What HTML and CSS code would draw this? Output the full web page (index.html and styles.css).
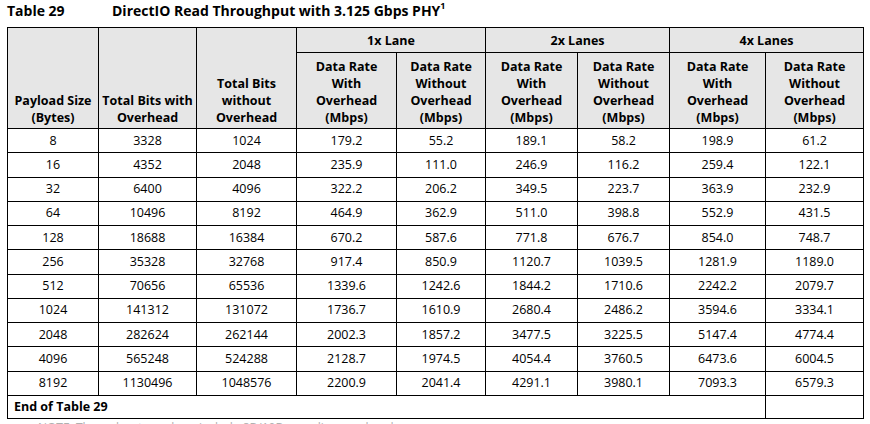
FILE: index.html
```html
<!DOCTYPE html>
<html>
<head>
<meta charset="utf-8">
<link rel="stylesheet" href="styles.css">
</head>
<body>
<div class="page">
  <div class="caption">
    <span class="cap-num">Table 29</span>
    <span class="cap-title">DirectIO Read Throughput with 3.125 Gbps PHY<sup>1</sup></span>
  </div>
  <table class="tbl">
    <colgroup>
      <col class="c1"><col class="c2"><col class="c3"><col class="c4"><col class="c5"><col class="c6"><col class="c7"><col class="c8"><col class="c9">
    </colgroup>
    <thead>
      <tr class="h1">
        <th rowspan="2">Payload Size<br>(Bytes)</th>
        <th rowspan="2">Total Bits with<br>Overhead</th>
        <th rowspan="2">Total Bits<br>without<br>Overhead</th>
        <th colspan="2" class="grp">1x Lane</th>
        <th colspan="2" class="grp">2x Lanes</th>
        <th colspan="2" class="grp">4x Lanes</th>
      </tr>
      <tr class="h2">
        <th>Data Rate<br>With<br>Overhead<br>(Mbps)</th>
        <th>Data Rate<br>Without<br>Overhead<br>(Mbps)</th>
        <th>Data Rate<br>With<br>Overhead<br>(Mbps)</th>
        <th>Data Rate<br>Without<br>Overhead<br>(Mbps)</th>
        <th>Data Rate<br>With<br>Overhead<br>(Mbps)</th>
        <th>Data Rate<br>Without<br>Overhead<br>(Mbps)</th>
      </tr>
    </thead>
    <tbody>
      <tr><td>8</td><td>3328</td><td>1024</td><td>179.2</td><td>55.2</td><td>189.1</td><td>58.2</td><td>198.9</td><td>61.2</td></tr>
      <tr><td>16</td><td>4352</td><td>2048</td><td>235.9</td><td>111.0</td><td>246.9</td><td>116.2</td><td>259.4</td><td>122.1</td></tr>
      <tr><td>32</td><td>6400</td><td>4096</td><td>322.2</td><td>206.2</td><td>349.5</td><td>223.7</td><td>363.9</td><td>232.9</td></tr>
      <tr><td>64</td><td>10496</td><td>8192</td><td>464.9</td><td>362.9</td><td>511.0</td><td>398.8</td><td>552.9</td><td>431.5</td></tr>
      <tr><td>128</td><td>18688</td><td>16384</td><td>670.2</td><td>587.6</td><td>771.8</td><td>676.7</td><td>854.0</td><td>748.7</td></tr>
      <tr><td>256</td><td>35328</td><td>32768</td><td>917.4</td><td>850.9</td><td>1120.7</td><td>1039.5</td><td>1281.9</td><td>1189.0</td></tr>
      <tr><td>512</td><td>70656</td><td>65536</td><td>1339.6</td><td>1242.6</td><td>1844.2</td><td>1710.6</td><td>2242.2</td><td>2079.7</td></tr>
      <tr><td>1024</td><td>141312</td><td>131072</td><td>1736.7</td><td>1610.9</td><td>2680.4</td><td>2486.2</td><td>3594.6</td><td>3334.1</td></tr>
      <tr><td>2048</td><td>282624</td><td>262144</td><td>2002.3</td><td>1857.2</td><td>3477.5</td><td>3225.5</td><td>5147.4</td><td>4774.4</td></tr>
      <tr><td>4096</td><td>565248</td><td>524288</td><td>2128.7</td><td>1974.5</td><td>4054.4</td><td>3760.5</td><td>6473.6</td><td>6004.5</td></tr>
      <tr><td>8192</td><td>1130496</td><td>1048576</td><td>2200.9</td><td>2041.4</td><td>4291.1</td><td>3980.1</td><td>7093.3</td><td>6579.3</td></tr>
    </tbody>
    <tfoot>
      <tr><td colspan="8" class="end">End of Table 29</td><td></td></tr>
    </tfoot>
  </table>
  <p class="note">NOTE: Throughput numbers include 8B/10B encoding overhead.</p>
</div>
</body>
</html>
```
FILE: styles.css
```css
html, body {
  margin: 0;
  padding: 0;
  background: #fff;
}
body {
  font-family: "Open Sans", "Noto Sans", sans-serif;
  color: #000;
  overflow: hidden;
}
.page {
  padding: 0 6px 0 7px;
}
.caption {
  display: flex;
  height: 27px;
  align-items: flex-start;
  padding-top: 2px;
  box-sizing: border-box;
  font-weight: 700;
  font-size: 14px;
  line-height: 18px;
}
.cap-num {
  width: 105px;
}
.cap-title sup {
  font-size: 9px;
  line-height: 0;
  position: relative;
  top: -1px;
}
.tbl {
  border-collapse: collapse;
  table-layout: fixed;
  width: 857px;
  font-size: 12.5px;
}
.c1 { width: 91px; }
.c2 { width: 98px; }
.c3 { width: 100px; }
.c4 { width: 100px; }
.c5 { width: 89px; }
.c6 { width: 92px; }
.c7 { width: 92px; }
.c8 { width: 96px; }
.c9 { width: 98px; }
.tbl th, .tbl td {
  border: 1px solid #000;
  padding: 0 2px;
  text-align: center;
}
.tbl th {
  background: #e6e6e6;
  font-weight: 700;
  line-height: 17px;
  vertical-align: bottom;
  padding-bottom: 2px;
  white-space: nowrap;
}
.h1 { height: 25px; }
.h2 { height: 76px; }
.tbl th.grp {
  padding-bottom: 3px;
}
.tbl tbody tr {
  height: 24.27px;
}
.tbl tbody td {
  line-height: 16px;
  vertical-align: middle;
}
.tbl tfoot tr {
  height: 23px;
}
.tbl td.end {
  text-align: left;
  font-weight: 700;
  padding-left: 6px;
}
.note {
  margin: 1px 0 0 31px;
  font-size: 12px;
  color: #b0b0b0;
  line-height: 16px;
}
```
